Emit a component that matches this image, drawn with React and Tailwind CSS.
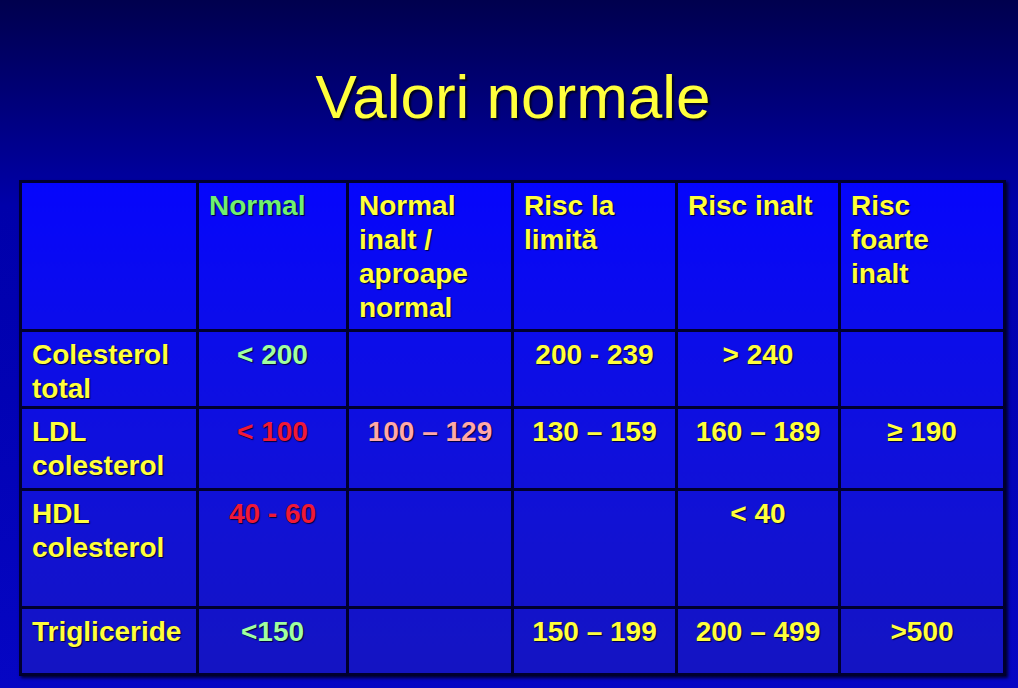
import React from 'react';

const YELLOW = 'text-[#ffff3c]';

const header = [
  { label: ['Normal'], color: 'text-[#70f070]' },
  { label: ['Normal', 'inalt /', 'aproape', 'normal'], color: YELLOW },
  { label: ['Risc la', 'limită'], color: YELLOW },
  { label: ['Risc inalt'], color: YELLOW },
  { label: ['Risc', 'foarte', 'inalt'], color: YELLOW },
];

const rows = [
  {
    name: ['Colesterol', 'total'],
    h: 'h-[76px]',
    cells: [
      { v: '< 200', c: 'text-[#a0ffa0]' },
      null,
      { v: '200 - 239', c: YELLOW },
      { v: '> 240', c: YELLOW },
      null,
    ],
  },
  {
    name: ['LDL', 'colesterol'],
    h: 'h-[82px]',
    cells: [
      { v: '< 100', c: 'text-[#f01838]' },
      { v: '100 – 129', c: 'text-[#ffa8a8]' },
      { v: '130 – 159', c: YELLOW },
      { v: '160 – 189', c: YELLOW },
      { v: '≥ 190', c: YELLOW },
    ],
  },
  {
    name: ['HDL', 'colesterol'],
    h: 'h-[118px]',
    cells: [
      { v: '40 - 60', c: 'text-[#f01838]' },
      null,
      null,
      { v: '< 40', c: YELLOW },
      null,
    ],
  },
  {
    name: ['Trigliceride'],
    h: 'h-[67px]',
    cells: [
      { v: '<150', c: 'text-[#a0ffa0]' },
      null,
      { v: '150 – 199', c: YELLOW },
      { v: '200 – 499', c: YELLOW },
      { v: '>500', c: YELLOW },
    ],
  },
];

const cellBase =
  'border-[3px] border-[#00002e] align-top pt-[6px] text-[28px] leading-[34px] font-bold [text-shadow:1px_1px_1px_#00003a]';

export default function App() {
  return (
    <div className="w-[1018px] h-[688px] overflow-hidden bg-gradient-to-b from-[#00004e] via-[#0000aa] via-30% to-[#0606c4] font-['Liberation_Sans',Arial,sans-serif]">
      <h1 className="pt-[66px] pl-[8px] h-[180px] text-center text-[62px] leading-[62px] text-[#ffff3c] [text-shadow:2px_2px_2px_#000022]">
        Valori normale
      </h1>
      <table className="ml-[19px] table-fixed border-collapse bg-gradient-to-b from-[#0505fc] to-[#1414c2] shadow-[2px_2px_3px_#000030]">
        <colgroup>
          <col className="w-[177px]" />
          <col className="w-[150px]" />
          <col className="w-[165px]" />
          <col className="w-[164px]" />
          <col className="w-[163px]" />
          <col className="w-[165px]" />
        </colgroup>
        <tbody>
          <tr className="h-[149px]">
            <td className={cellBase}></td>
            {header.map((h, i) => (
              <td key={i} className={`${cellBase} pl-[10px] ${h.color}`}>
                {h.label.map((l, j) => (
                  <div key={j}>{l}</div>
                ))}
              </td>
            ))}
          </tr>
          {rows.map((r, i) => (
            <tr key={i} className={r.h}>
              <td className={`${cellBase} pl-[10px] ${YELLOW}`}>
                {r.name.map((l, j) => (
                  <div key={j}>{l}</div>
                ))}
              </td>
              {r.cells.map((c, j) => (
                <td key={j} className={`${cellBase} text-center ${c ? c.c : ''}`}>
                  {c ? c.v : ''}
                </td>
              ))}
            </tr>
          ))}
        </tbody>
      </table>
    </div>
  );
}
